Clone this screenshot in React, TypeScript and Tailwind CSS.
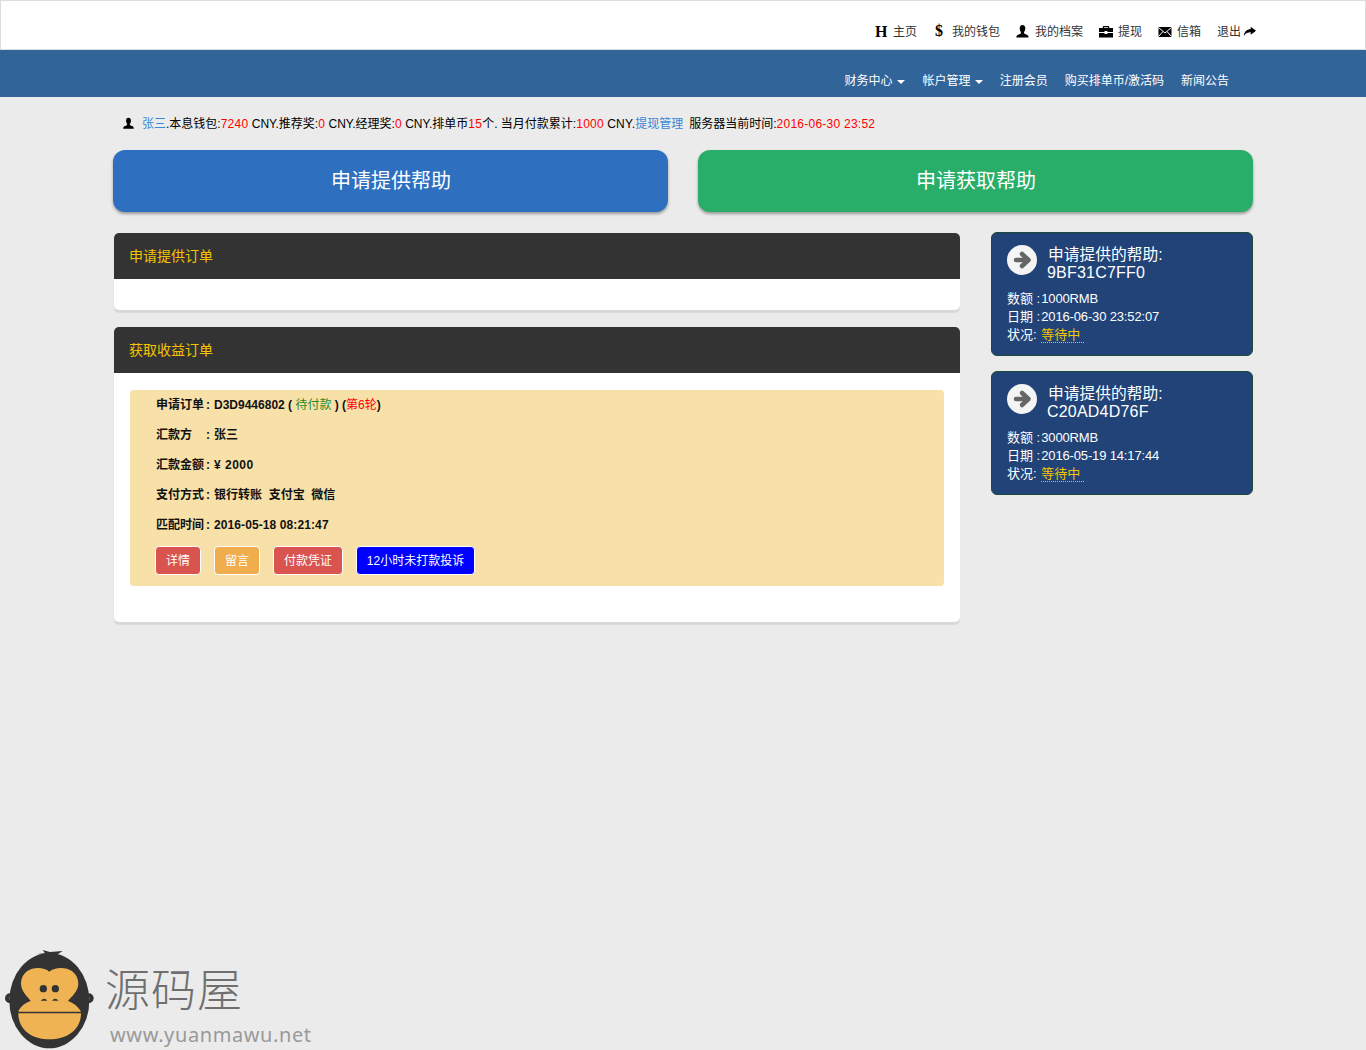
import React from "react";

const F = { fontFamily: '"Liberation Sans","Noto Sans CJK SC",sans-serif' };

function Gi({ d, className = "" }: { d: string; className?: string }) {
  return (
    <svg viewBox="0 0 16 16" className={"inline-block shrink-0 " + className} fill="currentColor">
      <path d={d} />
    </svg>
  );
}
const USER = "M8 1c2 0 3 1.500 3 3.500 0 1.600-.6 3-1.300 3.900-.1 1 .1 1.600 1.100 2.200 1.400.7 3.700 1 3.700 3.400v.5H1.500v-.5c0-2.400 2.300-2.700 3.700-3.400 1-.6 1.200-1.200 1.100-2.200C5.600 7.500 5 6.100 5 4.500 5 2.500 6 1 8 1z";
const BRIEF = "M5.500 2h5l.7.7V4H15v4H9.500V7h-3v1H1V4h3.800V2.700zM6 3.200V4h4v-.8zM1 9h5.500v1h3V9H15v4.500H1z";
const SHARE = "M9.500 2 16 7l-6.500 5V9C6 9 3 10 1 13.500 1.500 8.500 4.500 5.500 9.500 5z";

function Mail() {
  return (
    <svg viewBox="0 0 14 14" className="w-[14px] h-[14px] -mt-px">
      <rect x="0.500" y="2" width="13" height="10" fill="#000" />
      <path d="M0.500 2.500 7 8l6.500-5.500M0.500 11.500 5 6.500M13.500 11.500 9 6.500" fill="none" stroke="#fff" strokeWidth="1" />
    </svg>
  );
}

function TopItem({ icon, label, w }: { icon: React.ReactNode; label: string; w: string }) {
  return (
    <span className="flex items-center text-[12px] text-[#333]">
      <span className={"flex items-center " + w}>{icon}</span>
      <span>{label}</span>
    </span>
  );
}

function Caret() {
  return <span className="inline-block ml-[4px] mr-px align-middle border-t-[4px] border-x-[4px] border-x-transparent border-t-white" />;
}

function Arrow() {
  return (
    <span className="w-[30px] h-[30px] rounded-full bg-[#f4f4f4] flex items-center justify-center shrink-0">
      <svg viewBox="0 0 30 30" className="w-[30px] h-[30px]" fill="none" stroke="#666" strokeWidth="4.500" strokeLinecap="round" strokeLinejoin="round">
        <path d="M9 15H21" />
        <path d="M15 9l6.500 6-6.500 6" />
      </svg>
    </span>
  );
}

function Side({ code, amount, date }: { code: string; amount: string; date: string }) {
  return (
    <div className="h-[124px] bg-[#214377] border border-[#1d4a3a] rounded-[6px] pl-[15px] pt-[12px] text-white">
      <div className="flex gap-[10px] items-start">
        <Arrow />
        <div className="text-[16px] leading-[18px] pt-px">
          <div className="pl-px text-[15.750px]">申请提供的帮助:</div>
          <div className="tracking-[0.200px]">{code}</div>
        </div>
      </div>
      <div className="text-[13px] leading-[18px] mt-[8px]">
        <div>数额 :<span className="ml-px tracking-[-0.150px]">{amount}</span></div>
        <div>日期 :<span className="ml-px tracking-[-0.150px]">{date}</span></div>
        <div>
          状况: <span className="inline-block ml-px text-[#f5c400] border-b border-dotted border-[#f5c400] leading-[15px] w-[43px]">等待中</span>
        </div>
      </div>
    </div>
  );
}

function PanelHead({ title }: { title: string }) {
  return (
    <div className="h-[46px] bg-[#333] rounded-t-[5px] flex items-center pl-[15px] text-[14px] text-[#f5c400]">{title}</div>
  );
}

function Row({ label, children }: { label: string; children: React.ReactNode }) {
  return (
    <div className="h-[30px] flex items-center text-[12px] font-bold text-[#111]">
      <span className="w-[50px]">{label}</span>
      <span className="w-[8px]">:</span>
      <span>{children}</span>
    </div>
  );
}

function Btn({ className, children }: { className: string; children: React.ReactNode }) {
  return (
    <span className={"h-[29px] flex items-center justify-center rounded-[4px] border border-white text-white text-[12px] " + className}>{children}</span>
  );
}

function Num({ children }: { children: React.ReactNode }) {
  return <span className="text-[#f00] tracking-[0.250px]">{children}</span>;
}

function Monkey() {
  return (
    <svg viewBox="0 0 330 330" className="w-[110px] h-[110px]">
      <path d="M112 42 L135 40 L128 30 L150 36 L188 33 L165 48 Z" fill="#333" />
      <circle cx="30" cy="175" r="15" fill="#333" />
      <circle cx="266" cy="175" r="15" fill="#333" />
      <circle cx="36" cy="175" r="8" fill="#efb354" />
      <circle cx="260" cy="175" r="8" fill="#efb354" />
      <ellipse cx="148" cy="182" rx="120" ry="143" fill="#333" />
      <path d="M148 95C125 75 65 80 63 130C62 155 85 172 92 183C70 190 58 205 55 215H243C238 205 225 190 204 183C212 172 236 155 235 130C233 80 172 75 148 95Z" fill="#efb354" />
      <path d="M55 220H243C243 270 200 298 148 298C96 298 55 270 55 220Z" fill="#efb354" />
      <circle cx="130" cy="146" r="11" fill="#333" />
      <circle cx="166" cy="146" r="11" fill="#333" />
      <path d="M122 182Q133 170 142 182ZM176 182Q165 170 156 182Z" fill="#333" />
    </svg>
  );
}

export default function App() {
  return (
    <div style={F} className="relative min-h-[1050px] bg-[#ebebeb] overflow-hidden">
      <header className="h-[50px] bg-white border border-[#ddd] flex items-start justify-end pt-[22px] pr-[109px]">
        <div className="flex items-center gap-[16px]">
          <TopItem w="w-[18px]" icon={<span className="text-[16px] font-bold text-black leading-none" style={{ fontFamily: '"Liberation Serif",serif' }}>H</span>} label="主页" />
          <span className="ml-[2px]">
            <TopItem w="w-[17px]" icon={<span className="text-[16px] font-bold text-black leading-none -translate-y-[1px]" style={{ fontFamily: '"Liberation Serif",serif' }}>$</span>} label="我的钱包" />
          </span>
          <TopItem w="w-[19px]" icon={<Gi d={USER} className="text-black w-[15px] h-[15px] -ml-[1px] -mt-[2px]" />} label="我的档案" />
          <TopItem w="w-[19px]" icon={<Gi d={BRIEF} className="text-black w-[16px] h-[16px] -ml-[1px] -mt-px" />} label="提现" />
          <TopItem w="w-[19px]" icon={<Mail />} label="信箱" />
          <span className="flex items-center gap-[3px] text-[12px] text-[#333]">
            退出
            <span className="w-[12px] flex items-center"><Gi d={SHARE} className="text-black w-[13px] h-[13px] -ml-[1px] -mt-px" /></span>
          </span>
        </div>
      </header>

      <nav className="h-[47px] bg-[#31659a] flex items-start justify-end pt-[23px] pr-[137px] text-[12px] leading-[16px] text-white">
        <span>财务中心<Caret /></span>
        <span className="ml-[17px]">帐户管理<Caret /></span>
        <span className="ml-[16px]">注册会员</span>
        <span className="ml-[17px]">购买排单币/激活码</span>
        <span className="ml-[17px]">新闻公告</span>
      </nav>

      <main className="w-[1140px] mx-auto pl-px">
        <div className="flex items-center h-[53px] pl-[8px] text-[12px] text-black">
          <Gi d={USER} className="mr-[7px] w-[13px] h-[13px]" />
          <span className="text-[#3a87d6]">张三</span>.本息钱包:<Num>7240</Num>&nbsp;CNY.推荐奖:<Num>0</Num>&nbsp;CNY.经理奖:<Num>0</Num>&nbsp;CNY.排单币<Num>15</Num>个. 当月付款累计:<Num>1000</Num>&nbsp;<span className="tracking-[0.200px]">CNY.</span><span className="text-[#3a87d6]">提现管理</span><span className="ml-[6px]">服务器当前时间:</span><Num>2016-06-30 23:52</Num>
        </div>

        <div className="-ml-px flex gap-[30px]">
          <div className="w-[555px] h-[62px] bg-[#2e70bf] rounded-[12px] shadow-[0_2px_3px_rgba(0,0,0,0.35)] flex items-center justify-center text-[20px] text-white pl-px">申请提供帮助</div>
          <div className="w-[555px] h-[62px] bg-[#28ae69] rounded-[12px] shadow-[0_2px_3px_rgba(0,0,0,0.35)] flex items-center justify-center text-[20px] text-white pl-px">申请获取帮助</div>
        </div>

        <div className="flex mt-[21px] items-start">
          <div className="w-[846px]">
            <section className="bg-white rounded-[5px] shadow-[0_3px_1px_#d8d8d8]">
              <PanelHead title="申请提供订单" />
              <div className="h-[31px]" />
            </section>
            <section className="bg-white rounded-[5px] shadow-[0_3px_1px_#d8d8d8] mt-[17px]">
              <PanelHead title="获取收益订单" />
              <div className="px-[16px] pt-[17px] pb-[36px]">
                <div className="bg-[#f7e1a9] rounded-[4px] pl-[26px] h-[196px]">
                  <Row label="申请订单">D3D9446802 ( <span className="text-[#1e8a2e] font-normal">待付款</span> ) (<span className="text-[#f00] font-normal">第6轮</span>)</Row>
                  <Row label="汇款方">张三</Row>
                  <Row label="汇款金额"><span className="tracking-[0.500px]">¥ 2000</span></Row>
                  <Row label="支付方式">银行转账&nbsp; 支付宝&nbsp; 微信</Row>
                  <Row label="匹配时间"><span className="tracking-[0.100px]">2016-05-18 08:21:47</span></Row>
                  <div className="flex gap-[13px] mt-[6px] -ml-px">
                    <Btn className="w-[46px] bg-[#d9534f]">详情</Btn>
                    <Btn className="w-[46px] bg-[#f0ad4e]">留言</Btn>
                    <Btn className="w-[70px] bg-[#d9534f]">付款凭证</Btn>
                    <Btn className="w-[119px] bg-[#0000ff]">12小时未打款投诉</Btn>
                  </div>
                </div>
              </div>
            </section>
          </div>
          <aside className="w-[262px] ml-[31px] -mt-px flex flex-col gap-[15px]">
            <Side code="9BF31C7FF0" amount="1000RMB" date="2016-06-30 23:52:07" />
            <Side code="C20AD4D76F" amount="3000RMB" date="2016-05-19 14:17:44" />
          </aside>
        </div>
      </main>

      <div className="absolute left-0 top-[940px] flex items-start">
        <Monkey />
        <div className="-ml-[5px] mt-[24px]">
          <div className="text-[45px] leading-[56px] text-[#6f6f6f] font-light tracking-[1px]">源码屋</div>
          <div className="text-[20px] leading-[24px] mt-[3px] text-[#999] tracking-[0.600px] pl-[5px]" style={{ fontFamily: '"Noto Sans",sans-serif' }}>www.yuanmawu.net</div>
        </div>
      </div>
    </div>
  );
}
